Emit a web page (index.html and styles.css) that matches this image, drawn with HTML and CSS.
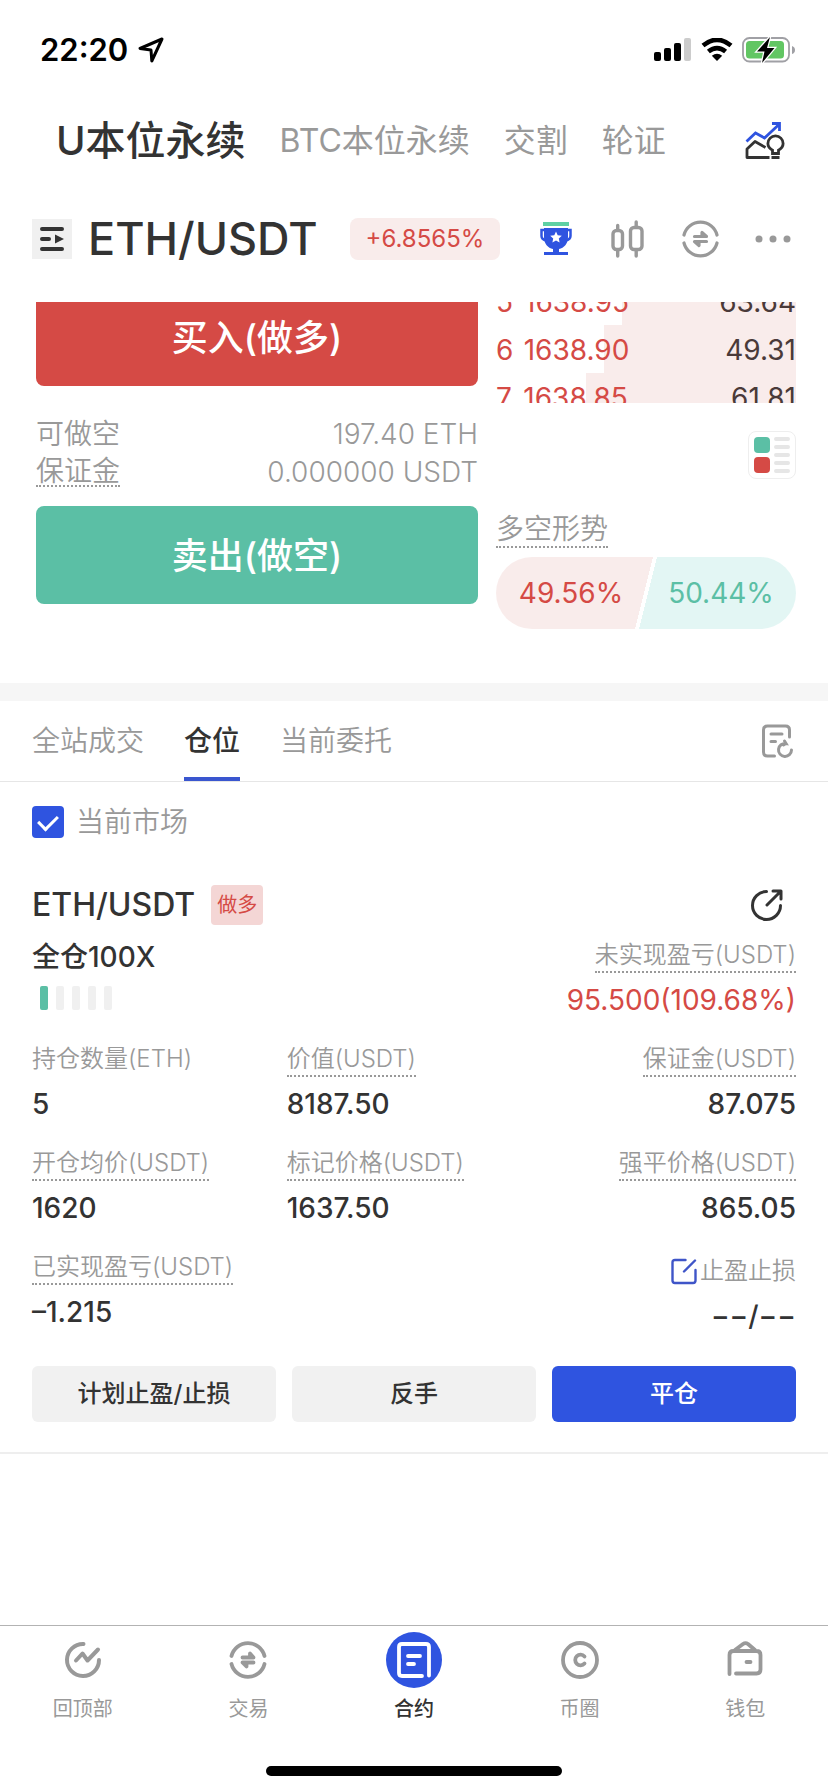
FILE: index.html
```html
<!DOCTYPE html>
<html lang="zh-CN">
<head>
    <meta charset="UTF-8">
    <meta name="viewport" content="width=device-width, initial-scale=1.0">
    <title>ETH/USDT 永续合约</title>
    <link rel="stylesheet" href="styles.css">
</head>
<body>
    <!-- 状态栏 -->
    <div class="status">
        <span class="time">22:20</span>
        <svg class="locate" width="26" height="26" viewBox="0 0 26 26"><path d="M24 2 2 11.5l11 1.5.8 11z" fill="none" stroke="#000" stroke-width="3" stroke-linejoin="round"/></svg>
        <div class="signals">
            <svg width="38" height="24" viewBox="0 0 38 24"><rect y="14" width="7" height="9" rx="2"/><rect x="10" y="10" width="7" height="13" rx="2"/><rect x="20" y="5" width="7" height="18" rx="2"/><rect x="30" width="7" height="23" rx="2" fill="#ccc"/></svg>
            <svg width="32" height="24" viewBox="0 0 32 24"><path d="M2 7.6Q16-4 30 7.6M7.400 13.600Q16 6.500 24.600 13.600" fill="none" stroke="#000" stroke-width="4.600"/><path d="M16 23l-5.200-5.200q5.200-4 10.400 0z"/></svg>
            <svg width="54" height="26" viewBox="0 0 54 26"><rect x="1" y="1" width="46" height="23.500" rx="6.500" fill="none" stroke="#a0a0a5" stroke-width="1.800"/><rect x="4" y="4" width="38" height="17.500" rx="3.500" fill="#62c663"/><path d="M50 9v8q3-1 3-4t-3-4z" fill="#a0a0a5"/><path d="M28 0 15 14.500h7.500L20 26l12.500-15H25z" fill="#000" stroke="#fff" stroke-width="2.500" paint-order="stroke"/></svg>
        </div>
    </div>

    <!-- 合约类型 -->
    <nav class="types">
        <a class="active" href="#">U本位永续</a>
        <a href="#">BTC本位永续</a>
        <a href="#">交割</a>
        <a href="#">轮证</a>
        <button class="icon-btn" aria-label="行情分析">
            <svg width="40" height="40" viewBox="0 0 40 40" fill="none" stroke-width="2.800"><path d="M1.500 20.500 10.500 12l9 5L34.500 3M27 2.500h7.500V10" stroke="#2f54e0"/><path d="M20.500 26.500 10 20.500l-8 7.500v8.500h22.500" stroke="#333" stroke-linejoin="round"/><path d="M27.500 32.500v-3.300c-3-1.600-4.600-4-4.600-6.700a7.600 7.600 0 0 1 15.200 0c0 2.700-1.600 5.100-4.600 6.700v3.300zM26.500 36.500h8" stroke="#333"/></svg>
        </button>
    </nav>

    <!-- 交易对 -->
    <header class="pair">
        <button class="menu" aria-label="切换交易对">
            <svg width="40" height="40" viewBox="0 0 40 40"><path d="M10 10h20M10 20h7M10 30h20" stroke="#333" stroke-width="4" stroke-linecap="round"/><path d="M23 15.500l9 4.500-9 4.500z" fill="#333"/></svg>
        </button>
        <h1>ETH/USDT</h1>
        <span class="change">+6.8565%</span>
        <div class="tools">
            <button class="icon-btn" aria-label="交易大赛">
                <svg width="48" height="40" viewBox="0 0 48 40"><path d="M11 3h26v4H11z" fill="#5fd0a4"/><path d="M12 9h24v9c0 7-4 11-9 12v3h9v3H12v-3h9v-3c-5-1-9-5-9-12z" fill="#2f54e0"/><path d="M13 11H9.500v6q0 3.500 5 4.500M35 11h3.500v6q0 3.500-5 4.500" fill="none" stroke="#2f54e0" stroke-width="2.500"/><path d="m24 12.500 1.700 3.700 4.100.5-3 2.800.8 4-3.600-2-3.600 2 .8-4-3-2.800 4.100-.5z" fill="#fff"/></svg>
            </button>
            <button class="icon-btn" aria-label="K线">
                <svg width="48" height="40" viewBox="0 0 48 40" fill="none" stroke="#999" stroke-width="3.400" stroke-linecap="round"><rect x="9" y="11.500" width="9.500" height="19" rx="3.500"/><rect x="26.500" y="8.500" width="11.500" height="22" rx="3.500"/><path d="M13.700 6.500v4.500M13.700 31v6M32.200 3v5M32.200 31v6"/></svg>
            </button>
            <button class="icon-btn" aria-label="划转">
                <svg width="48" height="40" viewBox="0 0 48 40" fill="none" stroke="#999" stroke-width="3.200" stroke-linecap="round" stroke-linejoin="round"><path d="M8 16A17 17 0 0 1 41 16M8 24a17 17 0 0 0 33 0"/><path d="M18.500 17.500h12l-4.500-4v4M30.500 22.500h-12l4.500 4v-4"/></svg>
            </button>
            <button class="icon-btn" aria-label="更多">
                <svg width="48" height="40" viewBox="0 0 48 40" fill="#999"><circle cx="11" cy="20" r="3.500"/><circle cx="25" cy="20" r="3.500"/><circle cx="39" cy="20" r="3.500"/></svg>
            </button>
        </div>
    </header>

    <!-- 下单区 -->
    <main>
        <section class="trade">
            <div class="order">
                <button class="buy">买入(做多)</button>
                <div class="limits">
                    <p><span>可做空</span><span>197.40 ETH</span></p>
                    <p><span class="dotted">保证金</span><span>0.000000 USDT</span></p>
                </div>
                <button class="sell">卖出(做空)</button>
            </div>
            <div class="market">
                <div class="asks">
                    <div class="ask"><i style="width: 58%"></i><b>5</b><b>1638.95</b><em>63.64</em></div>
                    <div class="ask"><i style="width: 64%"></i><b>6</b><b>1638.90</b><em>49.31</em></div>
                    <div class="ask"><i style="width: 70%"></i><b>7</b><b>1638.85</b><em>61.81</em></div>
                </div>
                <button class="depth" aria-label="盘口显示">
                    <svg width="36" height="36" viewBox="0 0 36 36"><rect width="16" height="16" rx="4" fill="#5bbfa5"/><rect y="20" width="16" height="16" rx="4" fill="#d54a45"/><path d="M22 2h12M22 10h12M22 18h12M22 26h12M22 34h12" stroke="#e6e6e6" stroke-width="4" stroke-linecap="round"/></svg>
                </button>
                <div class="trend"><span class="dotted">多空形势</span></div>
                <div class="ratio"><span class="long">49.56%</span><span class="short">50.44%</span></div>
            </div>
        </section>

        <!-- 仓位 -->
        <nav class="tabs">
            <a href="#">全站成交</a>
            <a class="active" href="#">仓位</a>
            <a href="#">当前委托</a>
            <button class="icon-btn" aria-label="历史记录">
                <svg width="36" height="36" viewBox="0 0 36 36" fill="none" stroke="#999" stroke-width="3" stroke-linecap="round"><path d="M14.500 33H7.500q-4 0-4-4V7q0-4 4-4h18q4 0 4 4v7M11 11h11M11 18.500h4.500"/><path d="M31.500 27a6.500 6.500 0 1 1-5.500-6.500l-1.500-2.500M26 20.500l-2.500 1.500"/></svg>
            </button>
        </nav>
        <label class="filter"><input type="checkbox" checked>当前市场</label>

        <section class="position">
            <div class="title">
                <h2>ETH/USDT</h2>
                <span class="tag">做多</span>
                <button class="icon-btn" aria-label="分享">
                    <svg width="48" height="40" viewBox="0 0 48 40" fill="none" stroke="#333" stroke-width="3" stroke-linecap="round" stroke-linejoin="round"><path d="M18.500 6.500A14 14 0 1 0 32.500 20.500M19 20 32.500 6.500M25 6h8v8"/></svg>
                </button>
            </div>
            <div class="summary">
                <div>
                    <p class="lever">全仓100X</p>
                    <div class="risk"><i class="on"></i><i></i><i></i><i></i><i></i></div>
                </div>
                <div class="cell right">
                    <span class="name dotted">未实现盈亏(USDT)</span>
                    <span class="value profit">95.500(109.68%)</span>
                </div>
            </div>
            <div class="grid">
                <div class="cell"><span class="name">持仓数量(ETH)</span><span class="value">5</span></div>
                <div class="cell"><span class="name dotted">价值(USDT)</span><span class="value">8187.50</span></div>
                <div class="cell right"><span class="name dotted">保证金(USDT)</span><span class="value">87.075</span></div>
                <div class="cell"><span class="name dotted">开仓均价(USDT)</span><span class="value">1620</span></div>
                <div class="cell"><span class="name dotted">标记价格(USDT)</span><span class="value">1637.50</span></div>
                <div class="cell right"><span class="name dotted">强平价格(USDT)</span><span class="value">865.05</span></div>
                <div class="cell"><span class="name dotted">已实现盈亏(USDT)</span><span class="value">–1.215</span></div>
                <div class="cell right stop">
                    <a class="name" href="#"><svg width="28" height="28" viewBox="0 0 28 28" fill="none" stroke="#3f55c8" stroke-width="2.400" stroke-linecap="round"><path d="M15.500 3H5Q2.500 3 2.500 5.500v18Q2.500 26 5 26h18q2.500 0 2.500-2.500V13M14 14.500 25 3.500"/></svg>止盈止损</a>
                    <span class="value">−−/−−</span>
                </div>
            </div>
            <div class="actions">
                <button>计划止盈/止损</button>
                <button>反手</button>
                <button class="primary">平仓</button>
            </div>
        </section>
    </main>

    <!-- 底部导航 -->
    <nav class="bottom">
        <a href="#">
            <svg width="56" height="56" viewBox="0 0 56 56" fill="none" stroke="#999" stroke-width="4" stroke-linecap="round"><path d="M28.500 12A16 16 0 1 0 44 28"/><path d="M21 28.500l6.500-7 5 7L43 17.500" stroke-linejoin="round"/></svg>
            回顶部
        </a>
        <a href="#">
            <svg width="56" height="56" viewBox="0 0 56 56" fill="none" stroke="#999" stroke-width="3.800" stroke-linecap="round" stroke-linejoin="round"><path d="M11.500 24A17 17 0 0 1 44.500 24M11.500 32a17 17 0 0 0 33 0"/><path d="M22.500 25.500h11l-3.500-4v4M33.500 30.500h-11l4 4v-4"/></svg>
            交易
        </a>
        <a class="active" href="#">
            <svg width="56" height="56" viewBox="0 0 56 56" fill="none" stroke="#fff" stroke-width="3.800" stroke-linecap="round"><circle cx="28" cy="28" r="28" fill="#2f54e0" stroke="none"/><path d="M43 43.500V15q0-3-3-3H16q-3 0-3 3v26q0 3 3 3h20M22 24h12M22 32h6"/></svg>
            合约
        </a>
        <a href="#">
            <svg width="56" height="56" viewBox="0 0 56 56" fill="none" stroke="#999" stroke-width="3.800" stroke-linecap="round"><circle cx="28" cy="28" r="17"/><path d="M32.500 24.500a5.300 5.300 0 1 0 0 7"/></svg>
            币圈
        </a>
        <a href="#">
            <svg width="56" height="56" viewBox="0 0 56 56" fill="none" stroke="#999" stroke-width="3.800" stroke-linecap="round" stroke-linejoin="round"><path d="M12.500 42V23q0-4 4-4h23q4 0 4 4v14.500q0 4-4 4H19M18 18l8-6q2.500-1.700 5 0l7 6M29.500 30h4"/></svg>
            钱包
        </a>
    </nav>
    <div class="home"></div>
</body>
</html>
```
FILE: styles.css
```css
*{
    margin: 0;
    padding: 0;
    box-sizing: border-box;
}
body{
    min-height: 100vh;
    display: flex;
    flex-direction: column;
    background-color: #fff;
    color: #333;
    font-family: Inter, "Noto Sans CJK SC", sans-serif;
    font-size: 28px;
    line-height: 40px;
}
a{
    color: inherit;
    text-decoration: none;
}
button{
    border: 0;
    background: none;
    font: inherit;
    color: inherit;
    cursor: pointer;
}
svg{
    display: block;
    flex: none;
}
.icon-btn{
    margin-left: auto;
}
.dotted{
    border-bottom: 2px dotted #999;
}

/* 状态栏 */
.status{
    height: 100px;
    padding: 0 32px 0 40px;
    display: flex;
    align-items: center;
    gap: 10px;
    color: #000;
}
.time{
    font-size: 31px;
    font-weight: 600;
}
.signals{
    margin-left: auto;
    display: flex;
    align-items: center;
    gap: 9px;
}

/* 合约类型 */
.types{
    height: 80px;
    padding: 2px 43px 0 56px;
    display: flex;
    align-items: center;
    gap: 34px;
    color: #999;
    font-size: 32px;
    white-space: nowrap;
}
.types .active{
    color: #333;
    font-size: 40px;
    font-weight: 500;
}

/* 交易对 */
.pair{
    padding: 38px 32px 42px;
    display: flex;
    align-items: center;
}
.menu{
    background-color: #f0f0f0;
}
.pair h1{
    margin: 0 32px 0 16px;
    font-size: 45px;
    font-weight: 500;
    line-height: 42px;
}
.change{
    padding: 0 16px;
    border-radius: 8px;
    background-color: #f9eceb;
    color: #d54a45;
    font-size: 24px;
    line-height: 42px;
}
.tools{
    margin-left: auto;
    display: flex;
    gap: 24px;
}

/* 下单区 */
.trade{
    padding: 0 32px 54px 36px;
    border-bottom: 18px solid #f6f6f6;
    display: grid;
    grid-template-columns: 442fr 300fr;
    gap: 18px;
    overflow: hidden;
}
.buy,.sell{
    width: 100%;
    height: 98px;
    padding-top: 2px;
    border-radius: 8px;
    color: #fff;
    font-size: 36px;
    font-weight: 500;
}
.buy{
    margin-top: -14px;
    background-color: #d54a45;
}
.sell{
    background-color: #5bbfa5;
}
.order{
    display: flex;
    flex-direction: column;
}
.limits{
    padding: 29px 0 15px;
    color: #999;
    font-weight: 350;
}
.limits p{
    display: flex;
    justify-content: space-between;
    line-height: 38px;
}
.limits .dotted{
    height: 34px;
    line-height: 36px;
}
.market{
    display: flex;
    flex-direction: column;
}
.asks{
    height: 101px;
    overflow: hidden;
}
.ask{
    height: 48px;
    padding-top: 2px;
    display: flex;
    align-items: center;
    position: relative;
    color: #d54a45;
}
.ask:first-child{
    margin-top: -25px;
}
.ask i{
    height: 48px;
    position: absolute;
    right: 0;
    top: 0;
    background-color: #f9eceb;
}
.ask b,.ask em{
    position: relative;
    font-weight: 400;
    font-style: normal;
}
.ask b:nth-of-type(2){
    width: 116px;
    text-align: right;
}
.ask em{
    margin-left: auto;
    color: #4a3a39;
}
.depth{
    margin: 28px 0 28px auto;
    width: 48px;
    height: 48px;
    padding: 5px;
    border: 1px solid #eee;
    border-radius: 8px;
}
.trend{
    display: flex;
    color: #999;
    font-weight: 350;
}
.trend .dotted{
    height: 41px;
    line-height: 44px;
}
.ratio{
    margin-top: 9px;
    height: 72px;
    border-radius: 36px;
    display: grid;
    grid-template-columns: 1fr 1fr;
    align-items: center;
    text-align: center;
    background-image: linear-gradient(104deg, #f9eceb calc(50% - 2px), #fff calc(50% - 2px), #fff calc(50% + 2px), #e3f6f4 calc(50% + 2px));
}
.long{
    color: #d54a45;
}
.short{
    color: #5bbfa5;
}

/* 仓位 */
.tabs{
    height: 81px;
    padding: 0 32px;
    border-bottom: 1px solid #e6e6e6;
    display: flex;
    align-items: center;
    gap: 40px;
    color: #999;
    font-weight: 350;
}
.tabs a{
    padding-top: 4px;
    line-height: 72px;
    border-bottom: 4px solid transparent;
}
.tabs .active{
    border-color: #3a56cf;
    color: #333;
    font-weight: 500;
}
.filter{
    margin: 20px 32px 0;
    display: flex;
    align-items: center;
    gap: 12px;
    color: #999;
    font-weight: 350;
}
.filter input{
    appearance: none;
    width: 32px;
    height: 32px;
    border-radius: 4px;
    display: grid;
    place-items: center;
    background-color: #2f54e0;
}
.filter input::after{
    content: "";
    width: 9px;
    height: 16px;
    margin-bottom: 4px;
    border: solid #fff;
    border-width: 0 3px 3px 0;
    transform: rotate(45deg);
}
.position{
    padding: 43px 32px 30px;
    border-bottom: 2px solid #eee;
}
.title{
    display: flex;
    align-items: center;
    gap: 16px;
}
.title h2{
    font-size: 32px;
    font-weight: 500;
}
.tag{
    padding: 0 6px;
    border-radius: 4px;
    background-color: #f4d6d5;
    color: #d54a45;
    font-size: 20px;
}
.summary{
    margin-top: 12px;
    display: flex;
    justify-content: space-between;
}
.lever{
    font-weight: 500;
}
.risk{
    padding: 9px 8px;
    display: flex;
    gap: 8px;
}
.risk i{
    width: 8px;
    height: 24px;
    border-radius: 2px;
    background-color: #f0f0f0;
}
.risk .on{
    background-color: #5bbfa5;
}
.cell{
    display: flex;
    flex-direction: column;
    align-items: flex-start;
    gap: 7px;
}
.right{
    align-items: flex-end;
}
.name{
    height: 36px;
    color: #999;
    font-size: 24px;
    font-weight: 350;
    line-height: 36px;
}
.value{
    font-weight: 500;
}
.profit{
    color: #d54a45;
    font-weight: 400;
}
.grid{
    margin-top: 21px;
    display: grid;
    grid-template-columns: repeat(3, 1fr);
    row-gap: 21px;
}
.stop{
    grid-column: 3;
    padding-top: 4px;
}
.stop .name{
    display: flex;
    align-items: center;
    gap: 2px;
}
.actions{
    margin-top: 30px;
    display: grid;
    grid-template-columns: repeat(3, 1fr);
    gap: 16px;
}
.actions button{
    height: 56px;
    border-radius: 6px;
    background-color: #f1f1f1;
    font-size: 24px;
    font-weight: 500;
}
.actions .primary{
    background-color: #2f54e0;
    color: #fff;
}

/* 底部导航 */
.bottom{
    margin-top: auto;
    padding: 6px 0 37px;
    border-top: 1px solid #b3b3b3;
    display: grid;
    grid-template-columns: repeat(5, 1fr);
    color: #999;
    font-size: 20px;
}
.bottom a{
    display: flex;
    flex-direction: column;
    align-items: center;
    gap: 1px;
}
.bottom .active{
    color: #333;
    font-weight: 500;
}
.home{
    width: 296px;
    height: 10px;
    margin: 0 auto 16px;
    border-radius: 5px;
    background-color: #000;
}
```
